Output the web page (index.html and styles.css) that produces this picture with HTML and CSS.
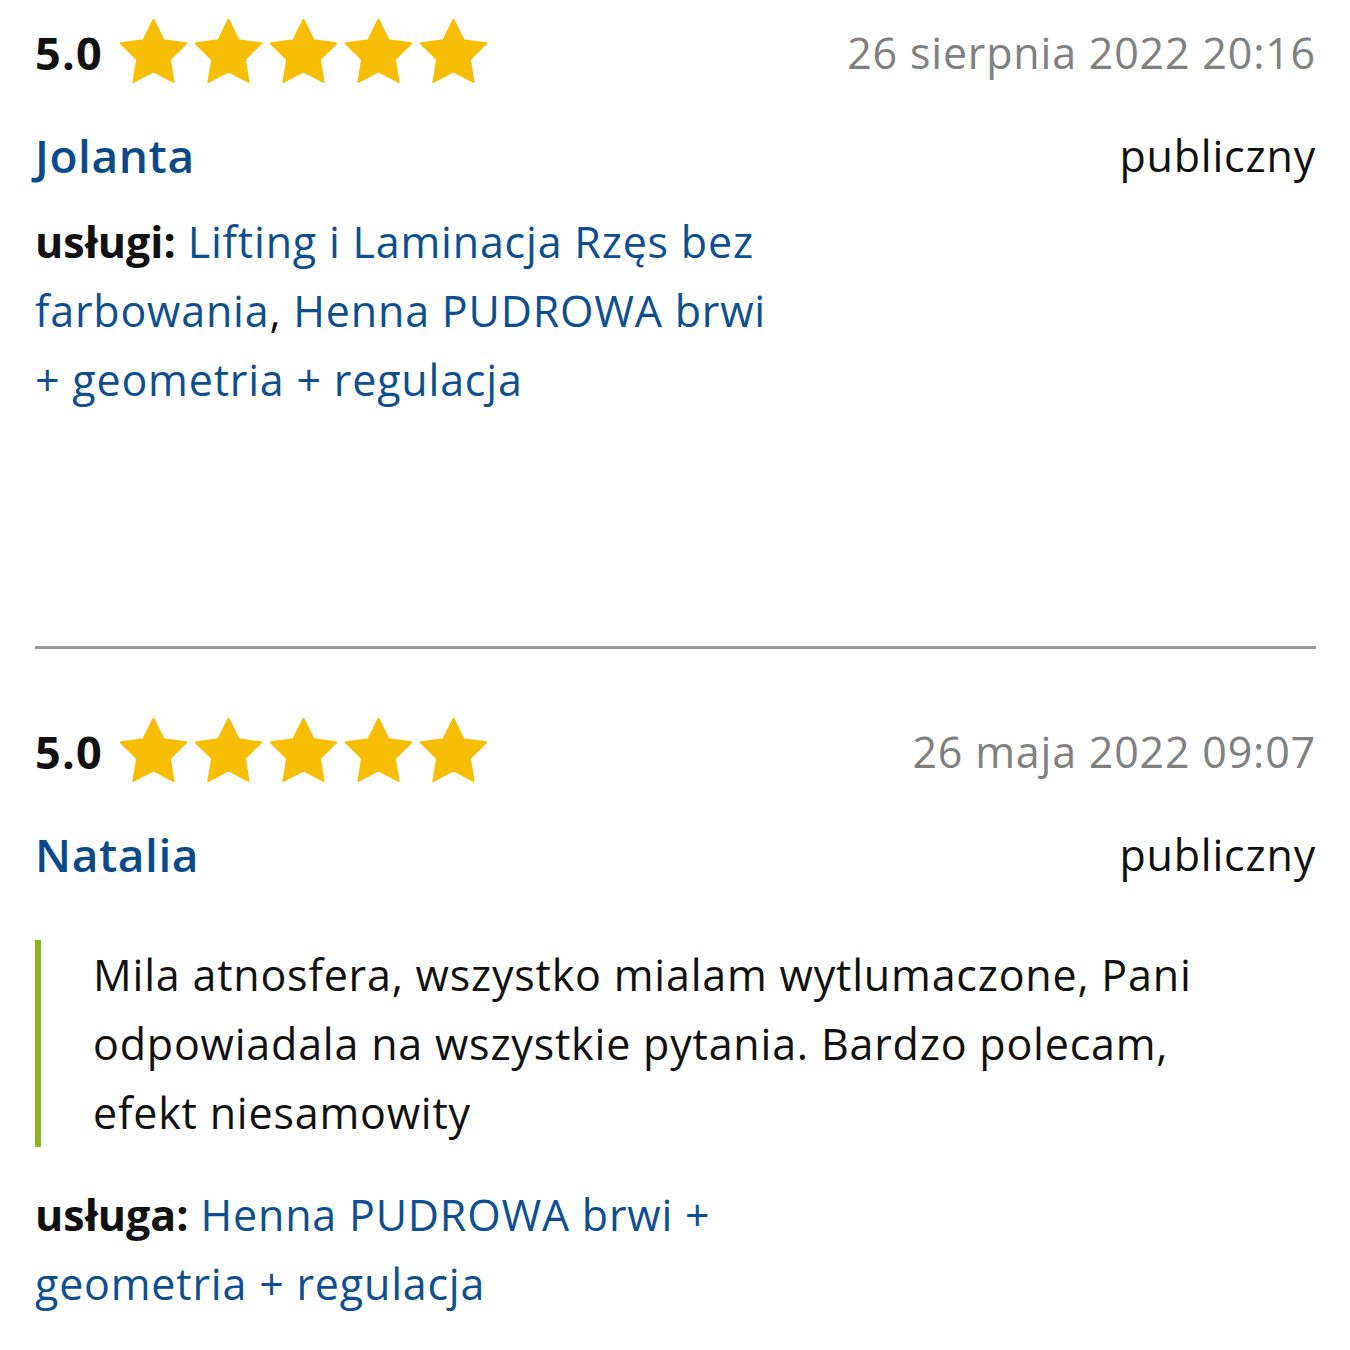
FILE: index.html
```html
<!DOCTYPE html>
<html lang="pl">
<head>
<meta charset="utf-8">
<title>Opinie</title>
<link rel="stylesheet" href="styles.css">
</head>
<body>
<main class="reviews">
  <article class="review review-first">
    <div class="review-head">
      <div class="rating">
        <span class="score">5.0</span>
        <span class="stars">
          <svg class="star" viewBox="0 0 24 24"><polygon points="12,1.6 15.2,8.1 22.4,9.1 17.2,14.2 18.4,21.4 12,18 5.6,21.4 6.8,14.2 1.6,9.1 8.8,8.1"/></svg>
          <svg class="star" viewBox="0 0 24 24"><polygon points="12,1.6 15.2,8.1 22.4,9.1 17.2,14.2 18.4,21.4 12,18 5.6,21.4 6.8,14.2 1.6,9.1 8.8,8.1"/></svg>
          <svg class="star" viewBox="0 0 24 24"><polygon points="12,1.6 15.2,8.1 22.4,9.1 17.2,14.2 18.4,21.4 12,18 5.6,21.4 6.8,14.2 1.6,9.1 8.8,8.1"/></svg>
          <svg class="star" viewBox="0 0 24 24"><polygon points="12,1.6 15.2,8.1 22.4,9.1 17.2,14.2 18.4,21.4 12,18 5.6,21.4 6.8,14.2 1.6,9.1 8.8,8.1"/></svg>
          <svg class="star" viewBox="0 0 24 24"><polygon points="12,1.6 15.2,8.1 22.4,9.1 17.2,14.2 18.4,21.4 12,18 5.6,21.4 6.8,14.2 1.6,9.1 8.8,8.1"/></svg>
        </span>
      </div>
      <span class="date">26 sierpnia 2022 20:16</span>
    </div>
    <div class="review-author">
      <a class="name" href="#">Jolanta</a>
      <span class="visibility">publiczny</span>
    </div>
    <p class="services"><span class="label">usługi:</span> <a href="#">Lifting i Laminacja Rzęs bez farbowania</a>, <a href="#">Henna PUDROWA brwi + geometria + regulacja</a></p>
  </article>
  <hr class="divider">
  <article class="review">
    <div class="review-head">
      <div class="rating">
        <span class="score">5.0</span>
        <span class="stars">
          <svg class="star" viewBox="0 0 24 24"><polygon points="12,1.6 15.2,8.1 22.4,9.1 17.2,14.2 18.4,21.4 12,18 5.6,21.4 6.8,14.2 1.6,9.1 8.8,8.1"/></svg>
          <svg class="star" viewBox="0 0 24 24"><polygon points="12,1.6 15.2,8.1 22.4,9.1 17.2,14.2 18.4,21.4 12,18 5.6,21.4 6.8,14.2 1.6,9.1 8.8,8.1"/></svg>
          <svg class="star" viewBox="0 0 24 24"><polygon points="12,1.6 15.2,8.1 22.4,9.1 17.2,14.2 18.4,21.4 12,18 5.6,21.4 6.8,14.2 1.6,9.1 8.8,8.1"/></svg>
          <svg class="star" viewBox="0 0 24 24"><polygon points="12,1.6 15.2,8.1 22.4,9.1 17.2,14.2 18.4,21.4 12,18 5.6,21.4 6.8,14.2 1.6,9.1 8.8,8.1"/></svg>
          <svg class="star" viewBox="0 0 24 24"><polygon points="12,1.6 15.2,8.1 22.4,9.1 17.2,14.2 18.4,21.4 12,18 5.6,21.4 6.8,14.2 1.6,9.1 8.8,8.1"/></svg>
        </span>
      </div>
      <span class="date">26 maja 2022 09:07</span>
    </div>
    <div class="review-author">
      <a class="name" href="#">Natalia</a>
      <span class="visibility">publiczny</span>
    </div>
    <blockquote class="review-text">Mila atnosfera, wszystko mialam wytlumaczone, Pani odpowiadala na wszystkie pytania. Bardzo polecam, efekt niesamowity</blockquote>
    <p class="services"><span class="label">usługa:</span> <a href="#">Henna PUDROWA brwi + geometria + regulacja</a></p>
  </article>
</main>
</body>
</html>
```

FILE: styles.css
```css
* { box-sizing: border-box; }

html, body {
  margin: 0;
  padding: 0;
  background: #ffffff;
}

body {
  font-family: "Open Sans", "Noto Sans", sans-serif;
  font-size: 43px;
  letter-spacing: 0.8px;
  line-height: 69px;
  color: #111111;
}

.reviews {
  padding: 18px 34px 0 35px;
}

.review {
  display: flex;
  flex-direction: column;
}

.review-first {
  padding-bottom: 232px;
}

.divider + .review {
  padding-top: 68px;
}

.review-head {
  display: flex;
  align-items: center;
  justify-content: space-between;
  height: 69px;
}

.rating {
  display: flex;
  align-items: center;
}

.score {
  font-weight: 700;
  font-size: 45px;
  color: #111111;
  letter-spacing: 1.2px;
}

.stars {
  display: flex;
  gap: 0;
  margin-left: 13px;
}

.star {
  width: 75px;
  height: 75px;
  display: block;
}

.star polygon {
  fill: #f7be05;
  stroke: #f7be05;
  stroke-width: 0.7;
  stroke-linejoin: round;
}

.date {
  color: #808080;
}

.review-author {
  display: flex;
  align-items: center;
  justify-content: space-between;
  height: 69px;
  margin-top: 34px;
}

.name {
  color: #0b4a88;
  font-weight: 600;
  font-size: 46px;
  letter-spacing: 0.6px;
  text-decoration: none;
}

.visibility {
  color: #111111;
}

.services {
  margin: 17px 0 0;
  max-width: 745px;
}

.services .label {
  font-weight: 700;
  color: #111111;
  letter-spacing: 0;
}

.services a {
  color: #0e4f8f;
  text-decoration: none;
}

.review-text {
  margin: 51px 0 0;
  padding-left: 52px;
  border-left: 6px solid #8bb51b;
  color: #111111;
  max-width: 1200px;
}

.review-text + .services {
  margin-top: 33px;
}

.divider {
  border: 0;
  height: 3px;
  background: #9a9a9a;
  margin: 0;
}
```
